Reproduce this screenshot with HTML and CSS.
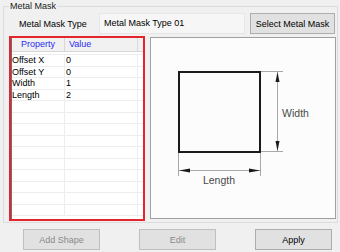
FILE: index.html
```html
<!DOCTYPE html>
<html lang="en">
<head>
  <meta charset="UTF-8">
  <title>Metal Mask</title>
  <link rel="stylesheet" href="styles.css">
</head>
<body>
  <fieldset class="group">
    <legend>Metal Mask</legend>
    <div class="type-row">
      <span class="type-label">Metal Mask Type</span>
      <div class="type-field">Metal Mask Type 01</div>
      <button class="btn select-btn">Select Metal Mask</button>
    </div>
    <div class="main-row">
      <div class="highlight">
        <div class="grid">
          <div class="grid-head">
            <div class="cell head-prop">Property</div>
            <div class="cell head-val">Value</div>
          </div>
          <div class="grid-body">
            <div class="row"><div class="cell">Offset X</div><div class="cell">0</div></div>
            <div class="row"><div class="cell">Offset Y</div><div class="cell">0</div></div>
            <div class="row"><div class="cell">Width</div><div class="cell">1</div></div>
            <div class="row"><div class="cell">Length</div><div class="cell">2</div></div>
            <div class="row"><div class="cell"></div><div class="cell"></div></div>
            <div class="row"><div class="cell"></div><div class="cell"></div></div>
            <div class="row"><div class="cell"></div><div class="cell"></div></div>
            <div class="row"><div class="cell"></div><div class="cell"></div></div>
            <div class="row"><div class="cell"></div><div class="cell"></div></div>
            <div class="row"><div class="cell"></div><div class="cell"></div></div>
            <div class="row"><div class="cell"></div><div class="cell"></div></div>
            <div class="row"><div class="cell"></div><div class="cell"></div></div>
            <div class="row"><div class="cell"></div><div class="cell"></div></div>
            <div class="row"><div class="cell"></div><div class="cell"></div></div>
          </div>
        </div>
      </div>
      <div class="preview">
        <svg width="184" height="180" viewBox="0 0 184 180">
          <!-- shape -->
          <rect x="28" y="34" width="81" height="80" fill="none" stroke="#1a1a1a" stroke-width="2"/>
          <!-- width dimension -->
          <g stroke="#a8a8a8" stroke-width="1">
            <line x1="110" y1="33.5" x2="132" y2="33.5"/>
            <line x1="110" y1="113.5" x2="132" y2="113.5"/>
            <line x1="126.5" y1="34" x2="126.5" y2="113"/>
            <line x1="27.5" y1="115" x2="27.5" y2="138"/>
            <line x1="109.5" y1="115" x2="109.5" y2="138"/>
            <line x1="28" y1="132.5" x2="109" y2="132.5"/>
          </g>
          <g fill="#1a1a1a">
            <polygon points="126.5,34 124.5,44 128.5,44"/>
            <polygon points="126.5,113 124.5,103 128.5,103"/>
            <polygon points="28,132.5 39,130.5 39,134.5"/>
            <polygon points="109,132.5 98,130.5 98,134.5"/>
          </g>
          <text x="144.5" y="78.5" class="dim-text" text-anchor="middle">Width</text>
          <text x="68" y="145.5" class="dim-text" text-anchor="middle">Length</text>
        </svg>
      </div>
    </div>
  </fieldset>
  <div class="actions">
    <button class="btn action" disabled>Add Shape</button>
    <button class="btn action" disabled>Edit</button>
    <button class="btn action">Apply</button>
  </div>
</body>
</html>
```

FILE: styles.css
```css
body {
  margin: 0;
  background-color: #f0f0f0;
  font-family: "Liberation Sans", Arial, sans-serif;
  font-size: 9px;
  color: #000;
}

.group {
  margin: 0 0 0 3px;
  padding: 0 0 1px 0;
  width: 333px;
  border: 1px solid #dcdcdc;
}

.group legend {
  margin-left: 5px;
  padding: 0 1px;
  line-height: 12px;
  color: #1a1a1a;
}

.type-row {
  display: flex;
  align-items: center;
  margin-top: 1px;
  padding-left: 15px;
  height: 21px;
}

.type-label {
  width: 80px;
}

.type-field {
  box-sizing: border-box;
  width: 146px;
  height: 21px;
  margin-right: 5px;
  padding-left: 4px;
  line-height: 19px;
  background-color: #f6f6f6;
  border: 1px solid #e6e6e6;
}

.btn {
  box-sizing: border-box;
  margin: 0;
  padding: 0;
  height: 21px;
  font-family: "Liberation Sans", Arial, sans-serif;
  font-size: 9px;
  color: #000;
  background-color: #e1e1e1;
  border: 1px solid #adadad;
  border-radius: 0;
}

.btn:disabled {
  color: #8a8a8a;
  border-color: #bfbfbf;
}

.select-btn {
  width: 85px;
}

.main-row {
  display: flex;
  align-items: flex-start;
  margin-top: 2px;
  padding-left: 5px;
}

.highlight {
  box-sizing: border-box;
  width: 136px;
  height: 185px;
  border: 2px solid #e3262e;
  background-color: #fff;
}

.grid {
  height: 100%;
  overflow: hidden;
  border-left: 1px solid #6e6e6e;
}

.grid-head,
.row {
  display: grid;
  grid-template-columns: 53px 73px 1fr;
}

.grid-head {
  box-sizing: border-box;
  height: 14px;
  background-color: #f1f1f1;
  border-bottom: 1px solid #d8d8d8;
}

.grid-head .cell {
  line-height: 13px;
  color: #2b2bf0;
  border-right: 1px solid #d8d8d8;
}

.head-prop {
  padding-left: 9px;
}

.head-val {
  padding-left: 4px;
}

.grid-body {
  margin-top: 2px;
  border-top: 1px solid #ededed;
}

.row {
  box-sizing: border-box;
  height: 11.5px;
  border-bottom: 1px solid #ededed;
}

.row .cell {
  padding-left: 0;
  line-height: 11px;
  border-right: 1px solid #ededed;
}

.row .cell + .cell {
  padding-left: 1px;
}

.cell {
  box-sizing: border-box;
  white-space: nowrap;
  overflow: hidden;
}

.preview {
  box-sizing: border-box;
  width: 186px;
  height: 182px;
  margin-left: 5px;
  margin-top: 1px;
  background-color: #fcfcfc;
  border: 1px solid #a0a0a0;
}

.preview svg {
  display: block;
}

.dim-text {
  font-family: "Liberation Sans", Arial, sans-serif;
  font-size: 10.5px;
  fill: #4a4a4a;
}

.actions {
  display: flex;
  gap: 39px;
  margin-top: 6px;
  padding-left: 23px;
}

.action {
  width: 77px;
}
```
